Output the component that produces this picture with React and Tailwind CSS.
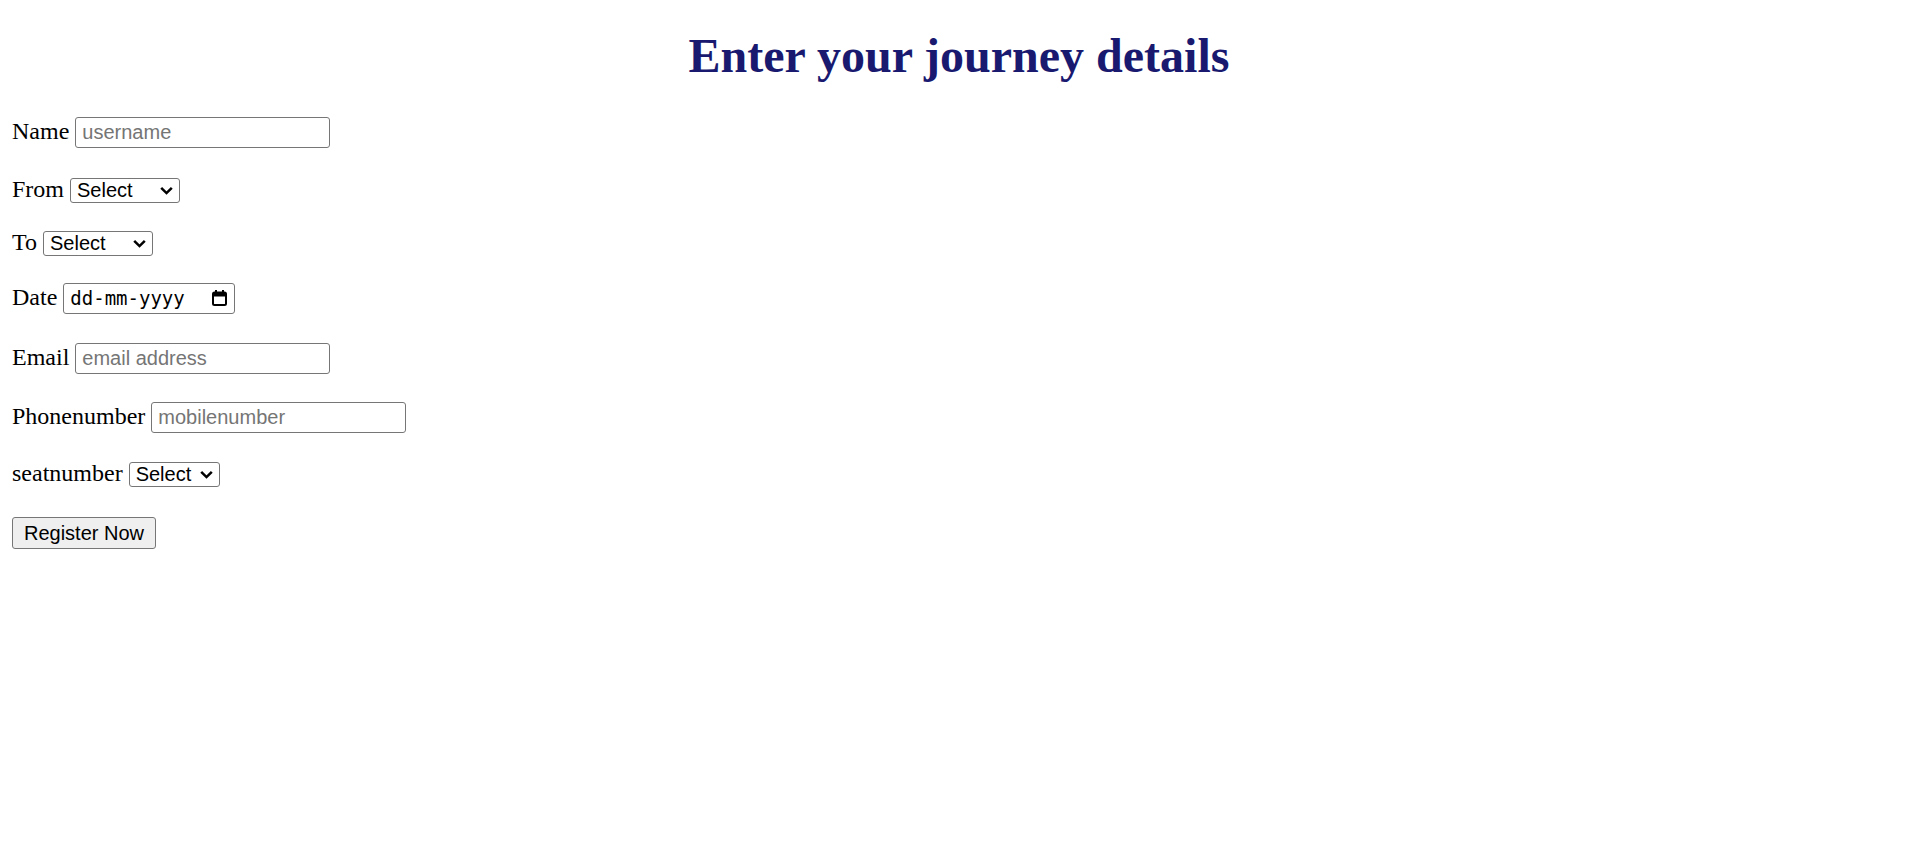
import React, { useState } from 'react';

const serif = "font-['Liberation_Serif','Times_New_Roman',serif]";
const sans = "font-['Liberation_Sans',Arial,sans-serif]";

const Chevron = () => (
  <svg width="13" height="9" viewBox="0 0 13 9" className="shrink-0">
    <path d="M1.2 1.8l5.3 5.3 5.3-5.3" fill="none" stroke="#000" strokeWidth="2.5" />
  </svg>
);

const FakeSelect = ({ width, name, value, onChange, options }) => (
  <div className={`relative ${width} h-[25px]`}>
    <select
      name={name}
      value={value}
      onChange={onChange}
      className={`appearance-none w-full h-full border border-[#767676] rounded-[3px] bg-white pl-[6px] text-[20px] leading-none text-black ${sans}`}
    >
      {options.map(o => (
        <option key={o} value={o}>{o}</option>
      ))}
    </select>
    <span className="pointer-events-none absolute right-[7px] top-[8px] flex">
      <Chevron />
    </span>
  </div>
);

const Label = ({ children }) => (
  <span className={`text-[24px] leading-[24px] pb-[2px] text-black ${serif}`}>{children}</span>
);

const textInput = `w-[255px] h-[31px] border border-[#767676] rounded-[3px] px-[6px] text-[20px] leading-none text-black placeholder:text-[#757575] bg-white ${sans}`;

const cities = ['Select', 'Chennai', 'Bangalore', 'Hyderabad', 'Mumbai'];
const seats = ['Select', '1', '2', '3', '4', '5'];

const App = () => {
  const [form, setForm] = useState({
    name: '',
    from: 'Select',
    to: 'Select',
    email: '',
    phone: '',
    seat: 'Select'
  });

  const handleChange = e => {
    const { name, value } = e.target;
    setForm(prev => ({ ...prev, [name]: value }));
  };

  return (
    <div className="min-h-screen bg-white px-[12px] pt-[32px]">
      <h1 className={`text-center text-[48px] leading-none font-bold text-[#191970] ${serif}`}>
        Enter your journey details
      </h1>

      <form onSubmit={e => e.preventDefault()} className="flex flex-col">
        <div className="mt-[36px] h-[32px] flex items-center gap-[6px]">
          <Label>Name</Label>
          <input name="name" value={form.name} onChange={handleChange} placeholder="username" className={textInput} />
        </div>

        <div className="mt-[26px] h-[32px] flex items-center gap-[6px]">
          <Label>From</Label>
          <FakeSelect width="w-[110px]" name="from" value={form.from} onChange={handleChange} options={cities} />
        </div>

        <div className="mt-[21px] h-[32px] flex items-center gap-[6px]">
          <Label>To</Label>
          <FakeSelect width="w-[110px]" name="to" value={form.to} onChange={handleChange} options={cities} />
        </div>

        <div className="mt-[23px] h-[32px] flex items-center gap-[6px]">
          <Label>Date</Label>
          <div className="w-[172px] h-[31px] border border-[#767676] rounded-[3px] bg-white flex items-center justify-between pl-[6px] pr-[7px]">
            <span className="text-[19px] leading-none text-black font-['DejaVu_Sans_Mono','Liberation_Mono',monospace]">dd-mm-yyyy</span>
            <svg width="15" height="16" viewBox="0 0 15 16">
              <rect x="3" y="0" width="2" height="3" fill="#000" />
              <rect x="10" y="0" width="2" height="3" fill="#000" />
              <rect x="1" y="2.5" width="13" height="12.5" rx="1.5" fill="none" stroke="#000" strokeWidth="2" />
              <rect x="1" y="2.5" width="13" height="4" fill="#000" />
            </svg>
          </div>
        </div>

        <div className="mt-[28px] h-[32px] flex items-center gap-[6px]">
          <Label>Email</Label>
          <input name="email" type="email" value={form.email} onChange={handleChange} placeholder="email address" className={textInput} />
        </div>

        <div className="mt-[27px] h-[32px] flex items-center gap-[6px]">
          <Label>Phonenumber</Label>
          <input name="phone" value={form.phone} onChange={handleChange} placeholder="mobilenumber" className={textInput} />
        </div>

        <div className="mt-[25px] h-[32px] flex items-center gap-[6px]">
          <Label>seatnumber</Label>
          <FakeSelect width="w-[91px]" name="seat" value={form.seat} onChange={handleChange} options={seats} />
        </div>

        <div className="mt-[27px] h-[32px] flex items-center">
          <button type="submit" className={`w-[144px] h-[32px] border border-[#767676] rounded-[3px] bg-[#efefef] text-[20px] leading-none text-black ${sans}`}>
            Register Now
          </button>
        </div>
      </form>
    </div>
  );
};

export default App;
